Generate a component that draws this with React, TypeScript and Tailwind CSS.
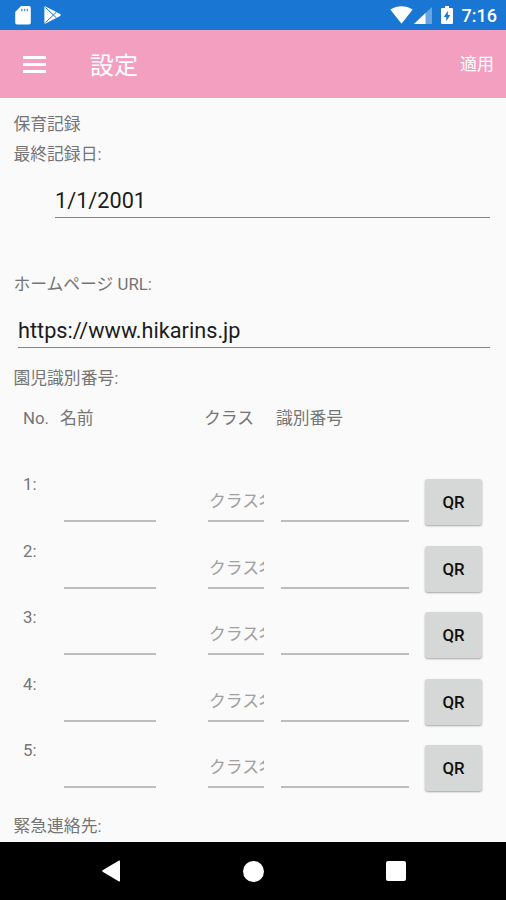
import React from 'react';

const CHILD_ROWS = [1, 2, 3, 4, 5];

const StatusBar: React.FC = () => (
  <div className="flex h-[30px] shrink-0 items-center bg-[#1976d2] text-white">
    <svg className="ml-[15px] mt-px h-[19px] w-4" viewBox="0 0 16 19">
      <path
        fillRule="evenodd"
        fill="#fff"
        d="M6 0h8a1.8 1.8 0 0 1 1.8 1.8v15A1.8 1.8 0 0 1 14 18.6H2a1.8 1.8 0 0 1-1.8-1.8V6z"
      />
      <path stroke="#1976d2" strokeOpacity=".75" strokeWidth="1.4" d="M6.8 2.8v2.4M9.6 2.8v2.4M12.400 2.800v2.400" />
    </svg>
    <svg className="ml-[13px] h-[18px] w-[17px]" viewBox="0 0 17 18">
      <path fill="#fff" d="M1.6.4 16.2 8.1q1 .9 0 1.8L1.6 17.6Q.4 17.8.4 16.600V1.400Q.4.2 1.600.4z" />
      <path stroke="#1976d2" strokeWidth="1" fill="none" d="M1.500 1.500l11 10.500M1.500 16.500L12.500 6" />
    </svg>
    <svg className="ml-auto h-[18px] w-[23px]" viewBox="0 0 23 18">
      <path fill="#fff" d="M11.5 17.8.3 3.6C7-1 16-1 22.7 3.6z" />
    </svg>
    <svg className="ml-px h-[17px] w-[18px]" viewBox="0 0 18 17">
      <path fill="#fff" fillOpacity=".35" d="M18 0v17H0z" />
      <path fill="#fff" d="M11.5 6.1V17H0z" />
    </svg>
    <svg className="ml-[9px] h-[18px] w-3" viewBox="0 0 12 18">
      <path fill="#fff" d="M4 0h4v2h2.8q1.2 0 1.2 1.2v13.6q0 1.2-1.2 1.2H1.2Q0 18 0 16.8V3.2Q0 2 1.2 2H4z" />
      <path fill="#1976d2" d="M6.8 4.8 2.8 11h2.5v4.2L9.3 9H6.8z" />
    </svg>
    <span className="ml-[9px] mr-[9px] mt-[2px] text-[18px] font-medium leading-none">7:16</span>
  </div>
);

const AppBar: React.FC = () => (
  <header className="flex h-[68px] shrink-0 items-center bg-[#f29fc0] text-white">
    <button aria-label="menu" className="ml-[23px] flex w-[23px] flex-col gap-1">
      <span className="h-[3px] bg-white" />
      <span className="h-[3px] bg-white" />
      <span className="h-[3px] bg-white" />
    </button>
    <h1 className="ml-11 pt-[3px] text-[24px] leading-none">設定</h1>
    <button className="ml-auto mr-3 pt-px text-[17px] leading-none">適用</button>
  </header>
);

const ChildRow: React.FC<{ no: number }> = ({ no }) => (
  <div className="flex h-[66.5px] items-start">
    <span className="w-[41px] pt-[3px] leading-5">{no}:</span>
    <input className="h-[51px] w-[92px] border-b-2 border-[#bdbdbd] outline-none" />
    <input
      placeholder="クラス名"
      className="ml-[52px] h-[51px] w-14 border-b-2 border-[#bdbdbd] pl-px pt-[11px] outline-none placeholder:text-[#a0a0a0]"
    />
    <input className="ml-[17px] h-[51px] w-32 border-b-2 border-[#bdbdbd] outline-none" />
    <button className="ml-4 mt-2 h-[46px] w-[57px] rounded-[3px] bg-[#d6d8d7] text-[16.8px] font-medium text-[#111] shadow-[0_1px_2px_rgba(0,0,0,0.35)]">
      QR
    </button>
  </div>
);

export default function App() {
  return (
    <div className="flex h-[900px] w-[506px] flex-col overflow-hidden bg-[#fafafa] font-['Roboto','Noto_Sans_CJK_JP',sans-serif]">
      <StatusBar />
      <AppBar />

      <main className="flex h-[744px] shrink-0 flex-col overflow-hidden pl-[13.5px] pr-4 pt-4 text-[16.8px] leading-5 text-[#757575]">
        <div>保育記録</div>
        <div className="mt-2.5">最終記録日:</div>
        <input
          defaultValue="1/1/2001"
          className="ml-[41.5px] mt-[19px] h-[35px] border-b border-[#858585] text-[21.7px] text-[#1c1c1c] outline-none"
        />

        <div className="mt-14">ホームページ URL:</div>
        <input
          defaultValue="https://www.hikarins.jp"
          className="ml-[4.5px] mt-[19px] h-[35px] border-b border-[#858585] text-[21.7px] text-[#1c1c1c] outline-none"
        />

        <div className="mt-5">園児識別番号:</div>
        <div className="mt-5 flex pl-[9.5px]">
          <span className="w-[37px]">No.</span>
          <span className="w-[144px]">名前</span>
          <span className="w-[72px]">クラス</span>
          <span>識別番号</span>
        </div>
        <div className="mt-[43px] pl-[9.5px]">
          {CHILD_ROWS.map((no) => (
            <ChildRow key={no} no={no} />
          ))}
        </div>
        <div className="mt-[12px]">緊急連絡先:</div>
      </main>

      <nav className="flex h-[58px] shrink-0 items-center bg-black">
        <svg className="ml-[102px] h-[22px] w-[18px]" viewBox="0 0 18 22">
          <path fill="#fff" d="M17 .5q1-.3 1 .8v19.4q0 1.1-1 .8L.6 11.7q-.7-.7 0-1.4z" />
        </svg>
        <span className="ml-[123px] size-[21px] rounded-full bg-white" />
        <span className="ml-[122px] size-5 rounded-[2px] bg-white" />
      </nav>
    </div>
  );
}
